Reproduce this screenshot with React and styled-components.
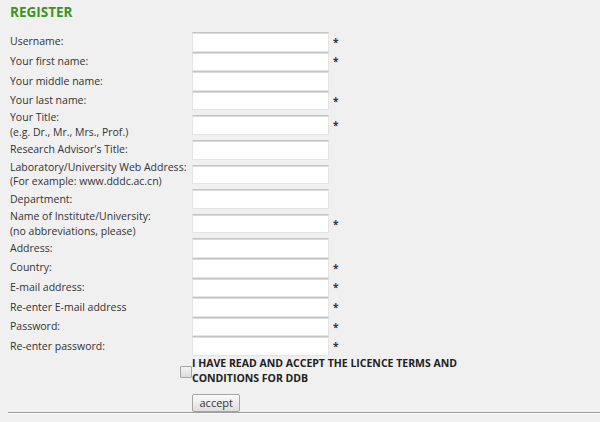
import React from 'react'
import styled, { createGlobalStyle } from 'styled-components'

const GlobalStyle = createGlobalStyle`
  body {
    margin: 0;
    background: #f0f0f0;
    font-family: "Open Sans", "Liberation Sans", sans-serif;
    color: #333;
  }
`

const Page = styled.div`
  padding: 3px 0 0 8px;
`

const Heading = styled.h3`
  margin: 0 0 10.6px 2px;
  font-size: 13.5px;
  font-weight: 700;
  color: #3d9421;
  line-height: 18.4px;
`

const FormGrid = styled.div`
  display: grid;
  grid-template-columns: 184px 137px auto;
  align-items: center;
`

const Label = styled.div`
  padding-left: 2px;
  font-size: 10.5px;
  line-height: 14.8px;
  min-height: 19.6px;
  display: flex;
  flex-direction: column;
  justify-content: center;
  color: #333;
`

const Field = styled.input`
  box-sizing: border-box;
  width: 137px;
  height: 19.6px;
  margin: 0;
  padding: 1px 3px;
  background: #fff;
  border: 1px solid #e4e4e4;
  border-top: 1px solid #c4c4c4;
  box-shadow: inset 0 1px 0 #dadada;
  font-family: inherit;
  font-size: 10.5px;
  outline: none;
`

const Required = styled.span`
  padding-left: 4px;
  font-size: 10px;
  font-weight: 700;
  color: #2f3442;
  visibility: ${(p) => (p.$show ? 'visible' : 'hidden')};
`

const TermsRow = styled.label`
  grid-column: 1 / 4;
  display: grid;
  grid-template-columns: 184px 270px;
  align-items: center;
`

const Check = styled.input`
  justify-self: end;
  box-sizing: border-box;
  width: 12px;
  height: 12px;
  margin: 2px 0 0 0;
  appearance: none;
  background: linear-gradient(#f4f4f4, #dcdcdc);
  border: 1px solid #a8a8a8;
  border-radius: 1px;
`

const TermsText = styled.span`
  font-size: 10.5px;
  font-weight: 700;
  line-height: 14.8px;
  color: #222;
  text-transform: uppercase;
`

const ButtonRow = styled.div`
  grid-column: 2 / 4;
  padding-top: 4.4px;
`

const AcceptButton = styled.button`
  height: 18.5px;
  padding: 0 6.5px;
  margin: 0;
  font-family: inherit;
  font-size: 11px;
  line-height: 16px;
  color: #333;
  background: linear-gradient(#fbfbfb, #dedede);
  border: 1px solid #a4a4a4;
  border-radius: 2px;
`

const Rule = styled.hr`
  margin: 0;
  border: 0;
  border-top: 1px solid #9c9c9c;
  border-bottom: 1px solid #fbfbfb;
`

const fields = [
  { label: 'Username:', required: true },
  { label: 'Your first name:', required: true },
  { label: 'Your middle name:' },
  { label: 'Your last name:', required: true },
  { label: 'Your Title:', sub: '(e.g. Dr., Mr., Mrs., Prof.)', required: true },
  { label: "Research Advisor's Title:" },
  { label: 'Laboratory/University Web Address:', sub: '(For example: www.dddc.ac.cn)' },
  { label: 'Department:' },
  { label: 'Name of Institute/University:', sub: '(no abbreviations, please)', required: true },
  { label: 'Address:' },
  { label: 'Country:', required: true },
  { label: 'E-mail address:', required: true },
  { label: 'Re-enter E-mail address', required: true },
  { label: 'Password:', required: true, type: 'password' },
  { label: 'Re-enter password:', required: true, type: 'password' },
]

export default function App() {
  return (
    <Page>
      <GlobalStyle />
      <Heading>REGISTER</Heading>
      <FormGrid>
        {fields.map((f) => (
          <React.Fragment key={f.label}>
            <Label>
              <span>{f.label}</span>
              {f.sub && <span>{f.sub}</span>}
            </Label>
            <Field type={f.type || 'text'} />
            <Required $show={f.required}>*</Required>
          </React.Fragment>
        ))}
        <TermsRow>
          <Check type="checkbox" />
          <TermsText>I have read and accept the licence terms and conditions for DDB</TermsText>
        </TermsRow>
        <ButtonRow>
          <AcceptButton>accept</AcceptButton>
        </ButtonRow>
      </FormGrid>
      <Rule />
    </Page>
  )
}
